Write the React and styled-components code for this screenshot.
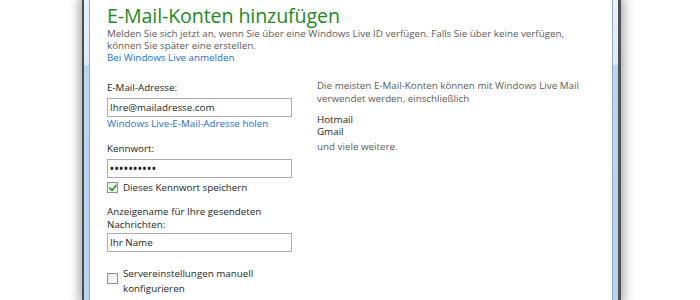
import React from "react"
import styled, { createGlobalStyle } from "styled-components"

const Global = createGlobalStyle`
  html, body {
    margin: 0;
    padding: 0;
    background: #fff;
  }
  body {
    font-family: "Open Sans", "Noto Sans", sans-serif;
  }
`

const Page = styled.div`
  width: 700px;
  height: 300px;
  overflow: hidden;
  display: flex;
  background: #fff;
`

const Window = styled.div`
  margin-left: 82px;
  width: 539px;
  height: 300px;
  display: flex;
  border-left: 2px solid #4a4d52;
  border-right: 3px solid #4f5257;
  box-sizing: border-box;
  box-shadow: 0 0 10px 3px rgba(0, 0, 0, 0.35);
`

const Frame = styled.div`
  width: 5px;
  flex: none;
  background: linear-gradient(to bottom, #e9f1fa 0, #dfeaf6 65px, #b9d5f1 65px, #b6d3f0 100%);
  border-${p => (p.$side === "left" ? "right" : "left")}: 1px solid #9aaabd;
`

const Content = styled.div`
  flex: 1;
  background: #fff;
  padding: 5px 0 0 17px;
  color: #1e1e1e;
`

const Title = styled.h1`
  margin: 0;
  font-size: 19.6px;
  line-height: 22px;
  font-weight: 400;
  color: #1e8a24;
  letter-spacing: -0.1px;
`

const Desc = styled.p`
  margin: 1px 0 0;
  font-size: 9.8px;
  line-height: 12px;
  color: #5c5c5c;
  width: 480px;
`

const Link = styled.a`
  display: block;
  color: #1a6fd2;
  text-decoration: none;
  font-size: 9.8px;
  line-height: ${p => p.$lh || "13px"};
`

const Columns = styled.div`
  display: flex;
  gap: 25px;
  margin-top: 17px;
`

const Left = styled.div`
  width: 185px;
  flex: none;
  display: flex;
  flex-direction: column;
`

const Right = styled.div`
  width: 290px;
  font-size: 9.8px;
  color: #5c5c5c;
  line-height: 13px;
  margin-top: -2px;
`

const Label = styled.div`
  font-size: 9.8px;
  line-height: 13px;
  color: #1e1e1e;
  margin-top: ${p => p.$mt || 0}px;
  margin-bottom: ${p => p.$mb ?? 4}px;
`

const Input = styled.div`
  height: 19px;
  box-sizing: border-box;
  border: 1px solid #abadb3;
  padding: 0 2px;
  display: flex;
  align-items: center;
  font-size: 9.8px;
  color: #1e1e1e;
  background: #fff;
`

const Dots = styled.span`
  font-size: 10px;
  letter-spacing: 0.9px;
  font-weight: 700;
  margin-top: -1px;
`

const CheckRow = styled.label`
  display: flex;
  align-items: flex-start;
  gap: 5px;
  margin-top: ${p => p.$mt || 0}px;
  font-size: 9.8px;
  line-height: ${p => p.$lh || 13}px;
  color: #1e1e1e;
`

const Box = styled.span`
  width: 11px;
  height: 11px;
  flex: none;
  margin-top: ${p => p.$mt || 1}px;
  box-sizing: border-box;
  border: 1px solid #8e8f91;
  background: linear-gradient(135deg, #e6e6e6, #f7f7f7 60%, #ffffff);
  display: flex;
  align-items: center;
  justify-content: center;
`

const List = styled.div`
  margin-top: 9px;
  line-height: 12px;
`

const Item = styled.div`
  color: ${p => (p.$dark ? "#1e1e1e" : "#5c5c5c")};
  margin-top: ${p => p.$mt || 0}px;
`

function Check() {
  return (
    <svg width="8" height="8" viewBox="0 0 8 8">
      <path d="M1 4.2 L3 6.3 L7 1.5" fill="none" stroke="#2f9a2f" strokeWidth="1.8" strokeLinecap="round" strokeLinejoin="round" />
    </svg>
  )
}

export default function App() {
  return (
    <Page>
      <Global />
      <Window>
        <Frame $side="left" />
        <Content>
          <Title>E-Mail-Konten hinzufügen</Title>
          <Desc>
            Melden Sie sich jetzt an, wenn Sie über eine Windows Live ID verfügen. Falls Sie über keine verfügen,<br />
            können Sie später eine erstellen.
            <Link href="#" $lh="12px">Bei Windows Live anmelden</Link>
          </Desc>
          <Columns>
            <Left>
              <Label>E-Mail-Adresse:</Label>
              <Input>Ihre@mailadresse.com</Input>
              <Link href="#">Windows Live-E-Mail-Adresse holen</Link>
              <Label $mt={12}>Kennwort:</Label>
              <Input><Dots>••••••••••</Dots></Input>
              <CheckRow $mt={3}>
                <Box><Check /></Box>
                Dieses Kennwort speichern
              </CheckRow>
              <Label $mt={11} $mb={2}>
                Anzeigename für Ihre gesendeten<br />Nachrichten:
              </Label>
              <Input>Ihr Name</Input>
              <CheckRow $mt={14} $lh={15}>
                <Box $mt={7} />
                <span>Servereinstellungen manuell<br />konfigurieren</span>
              </CheckRow>
            </Left>
            <Right>
              Die meisten E-Mail-Konten können mit Windows Live Mail<br />
              verwendet werden, einschließlich
              <List>
                <Item $dark>Hotmail</Item>
                <Item $dark>Gmail</Item>
                <Item $mt={3}>und viele weitere.</Item>
              </List>
            </Right>
          </Columns>
        </Content>
        <Frame $side="right" />
      </Window>
    </Page>
  )
}
